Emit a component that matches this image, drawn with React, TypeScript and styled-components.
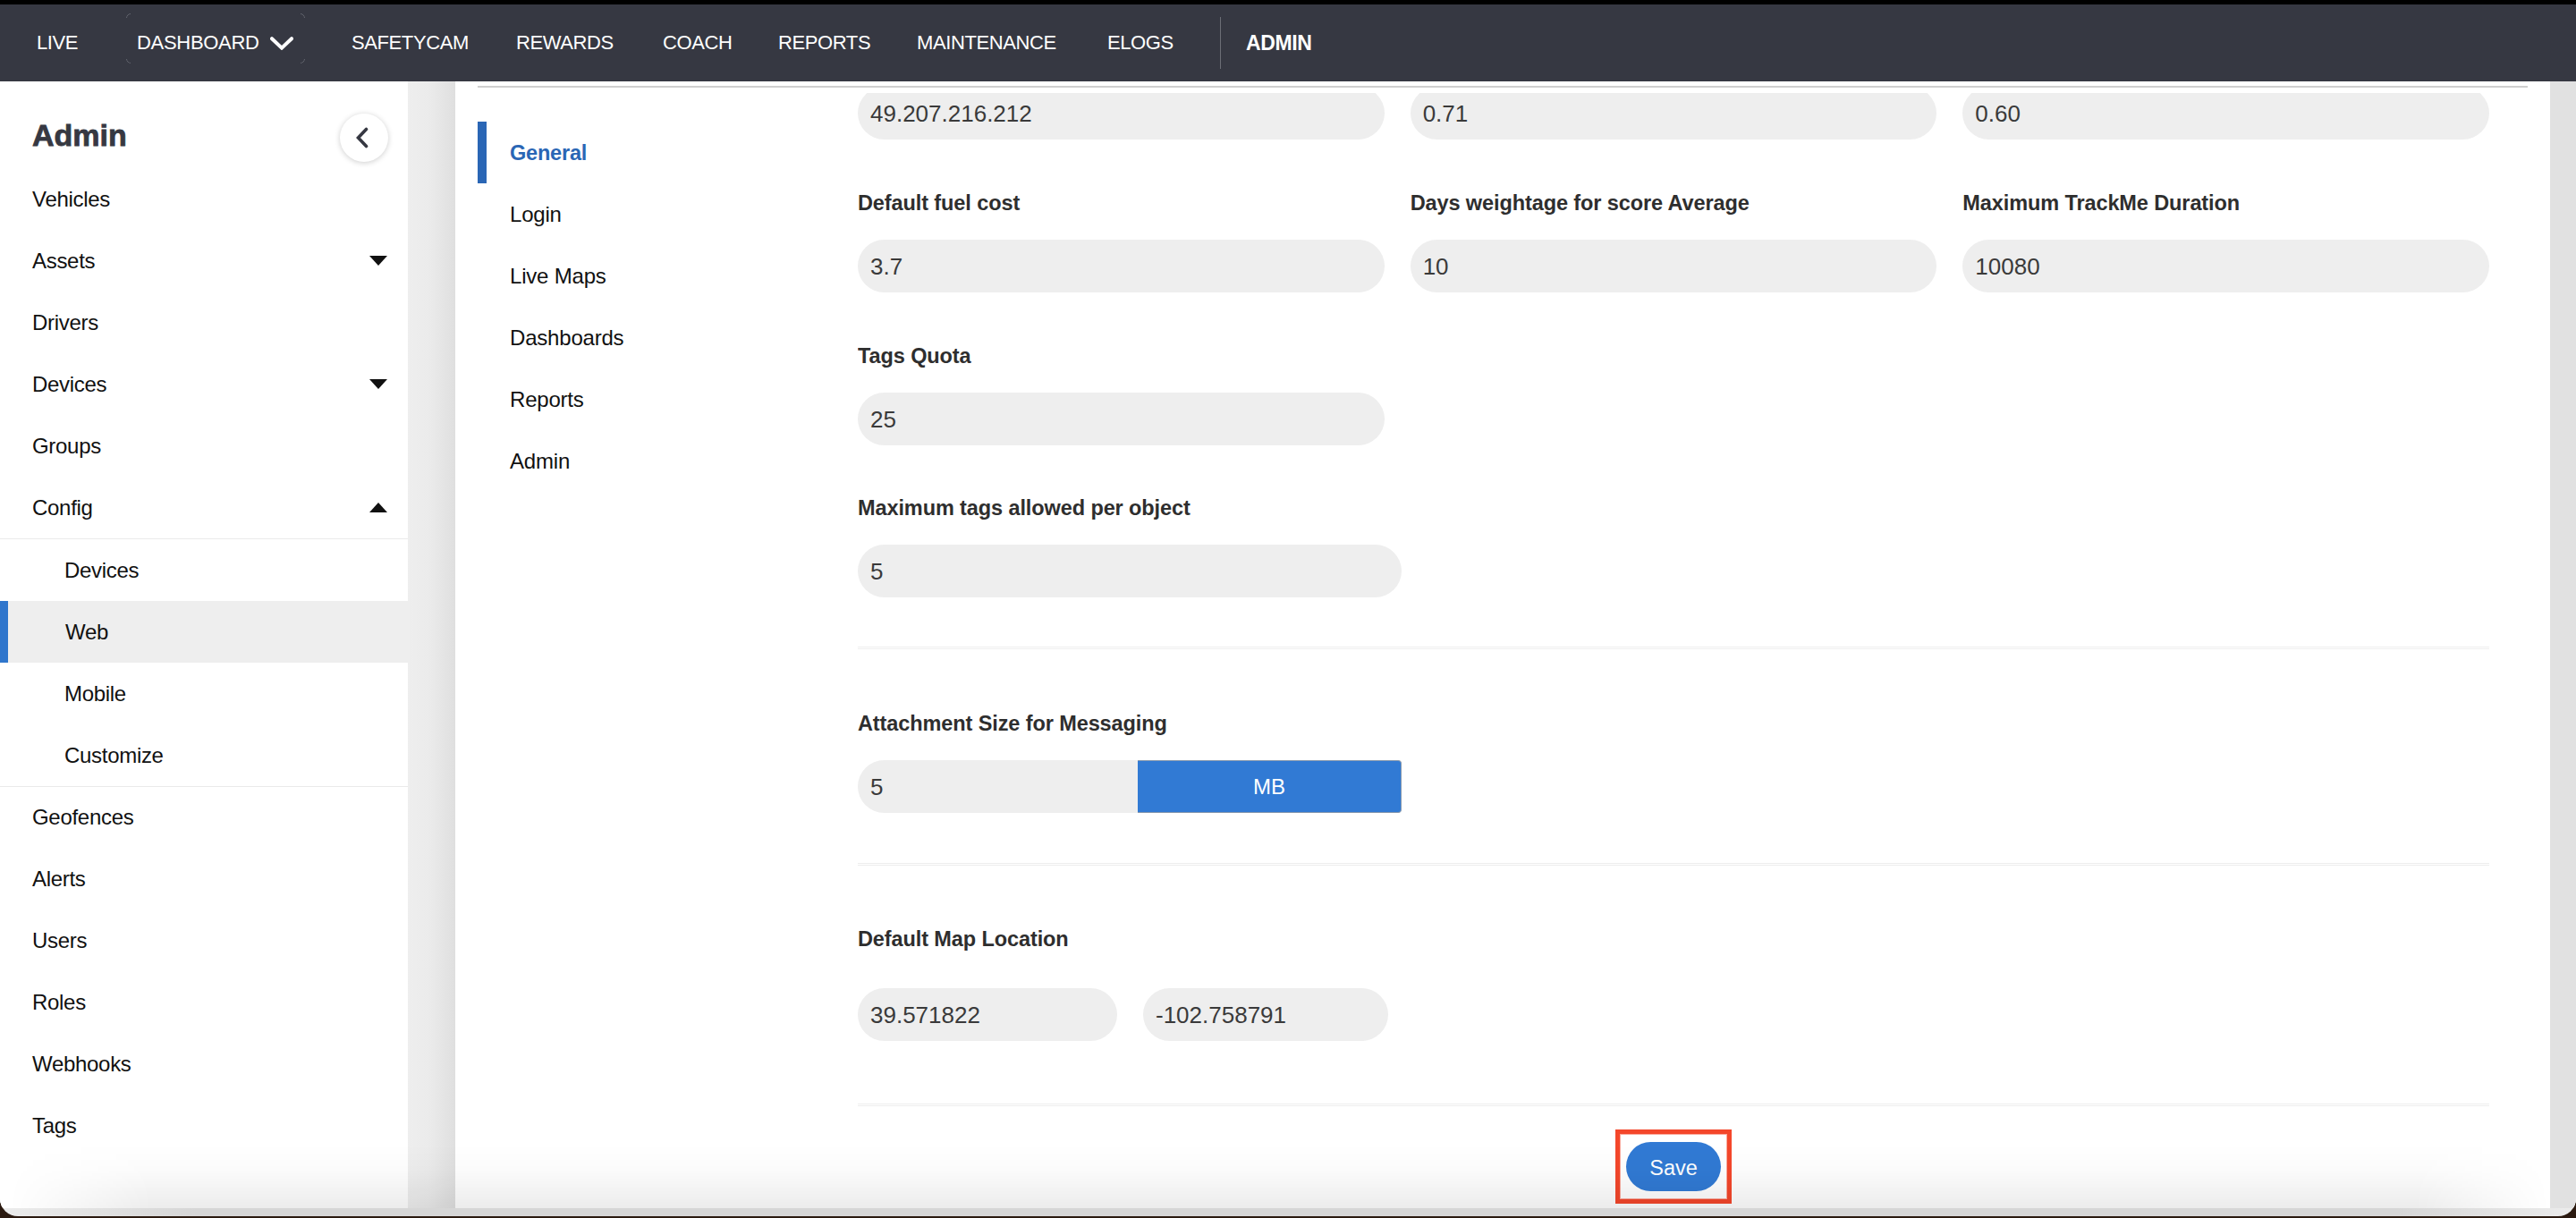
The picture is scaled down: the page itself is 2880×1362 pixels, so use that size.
import React from "react";
import styled, { createGlobalStyle } from "styled-components";

const Global = createGlobalStyle`
  html, body { margin: 0; padding: 0; background: #3a2618; }
  body { font-family: "Liberation Sans", Arial, sans-serif; overflow: hidden; }
  * { box-sizing: border-box; }
`;

const Page = styled.div`
  width: 2880px;
  height: 1362px;
  background: #2b1a10;
  display: flex;
  flex-direction: column;
  overflow: hidden;
`;
const TopEdge = styled.div`
  height: 5px;
  background: #000;
  flex: none;
`;
const Window = styled.div`
  position: relative;
  height: 1355px;
  flex: none;
  display: flex;
  flex-direction: column;
  overflow: hidden;
  border-radius: 0 0 20px 20px;
  background: linear-gradient(90deg, #ececec 0, #d6d6d6 220px, #d6d6d6 2680px, #ececec 2880px);
`;
const TopBar = styled.header`
  height: 86px;
  flex: none;
  background: #363842;
  display: flex;
  align-items: center;
  padding-left: 41px;
  color: #fff;
`;
const NavItem = styled.a<{ $w: number; $bold?: boolean }>`
  width: ${(p) => p.$w}px;
  flex: none;
  font-size: ${(p) => (p.$bold ? 23 : 22)}px;
  font-weight: ${(p) => (p.$bold ? 700 : 400)};
  white-space: nowrap;
  letter-spacing: -0.4px;
`;
const DashboardItem = styled.a`
  position: relative;
  width: 240px;
  flex: none;
  display: flex;
  align-items: center;
  gap: 12px;
  font-size: 22px;
  letter-spacing: -0.3px;
  white-space: nowrap;
  &::before {
    content: "";
    position: absolute;
    left: -12px;
    top: -20px;
    width: 198px;
    height: 54px;
    border: 1px solid #666972;
    border-radius: 5px;
    -webkit-mask:
      linear-gradient(#000 0 0) left top / 5px 5px no-repeat,
      linear-gradient(#000 0 0) right top / 5px 5px no-repeat,
      linear-gradient(#000 0 0) left bottom / 5px 5px no-repeat,
      linear-gradient(#000 0 0) right bottom / 5px 5px no-repeat;
    mask:
      linear-gradient(#000 0 0) left top / 5px 5px no-repeat,
      linear-gradient(#000 0 0) right top / 5px 5px no-repeat,
      linear-gradient(#000 0 0) left bottom / 5px 5px no-repeat,
      linear-gradient(#000 0 0) right bottom / 5px 5px no-repeat;
  }
`;
const NavDivider = styled.div`
  width: 1px;
  height: 58px;
  background: #6b6d75;
  margin-right: 28px;
  flex: none;
`;
const Body = styled.div`
  flex: 1;
  display: flex;
  min-height: 0;
  margin-bottom: 9px;
  background: #fff;
`;
const Sidebar = styled.aside`
  width: 456px;
  flex: none;
  background: #fff;
  display: flex;
  flex-direction: column;
  color: #111;
`;
const SideHead = styled.div`
  height: 97px;
  flex: none;
  padding: 36px 22px 0 36px;
  display: flex;
  justify-content: space-between;
  align-items: flex-start;
`;
const SideTitle = styled.h1`
  margin: 4px 0 0;
  font-size: 34px;
  line-height: 40px;
  font-weight: 700;
  color: #363842;
  -webkit-text-stroke: 0.8px #363842;
`;
const BackButton = styled.button`
  width: 54px;
  height: 54px;
  border: none;
  border-radius: 50%;
  background: #fff;
  box-shadow: 0 1px 6px rgba(0, 0, 0, 0.2);
  display: flex;
  align-items: center;
  justify-content: center;
  padding: 0 4px 0 0;
`;
const SideRow = styled.div`
  height: 69px;
  flex: none;
  display: flex;
  align-items: center;
  justify-content: space-between;
  padding: 0 23px 0 36px;
  font-size: 24px;
  letter-spacing: -0.3px;
`;
const Caret = styled.span<{ $up?: boolean }>`
  width: 0;
  height: 0;
  border-left: 10px solid transparent;
  border-right: 10px solid transparent;
  ${(p) => (p.$up ? "border-bottom: 11px solid #111;" : "border-top: 11px solid #111;")}
`;
const SubGroup = styled.div`
  border-top: 1px solid #eaeaea;
  border-bottom: 1px solid #eaeaea;
  margin-bottom: -1px;
`;
const SubRow = styled.div<{ $active?: boolean }>`
  height: 69px;
  display: flex;
  align-items: center;
  padding-left: ${(p) => (p.$active ? 64 : 72)}px;
  font-size: 24px;
  letter-spacing: -0.3px;
  ${(p) => p.$active && "background: #eeeeee; border-left: 9px solid #2f76cc;"}
`;
const Gutter = styled.div`
  width: 53px;
  flex: none;
  background: linear-gradient(90deg, #eeeeee 0%, #ebebeb 45%, #dfdfdf 100%);
`;
const Panel = styled.main`
  flex: 1;
  min-width: 0;
  background: #fff;
  display: flex;
  flex-direction: column;
  padding: 5px 25px 0 25px;
`;
const PanelRule = styled.div`
  height: 2px;
  flex: none;
  background: #cfcfcf;
  margin-bottom: 6px;
`;
const PanelBody = styled.div`
  flex: 1;
  min-height: 0;
  display: flex;
`;
const SubNav = styled.nav`
  width: 425px;
  flex: none;
  padding-top: 32px;
`;
const SubNavItem = styled.a<{ $active?: boolean }>`
  display: flex;
  align-items: center;
  height: 69px;
  font-size: 24px;
  letter-spacing: -0.2px;
  color: #111;
  padding-left: 36px;
  ${(p) =>
    p.$active &&
    "border-left: 10px solid #2a66b5; padding: 2px 0 0 26px; color: #2a66b5; font-weight: 700; font-size: 23.5px;"}
`;
const Form = styled.section`
  width: 1824px;
  flex: none;
  overflow: hidden;
`;
const ClippedFirst = styled.div`
  margin-top: -7px;
`;
const Grid3 = styled.div<{ $top?: number }>`
  display: grid;
  grid-template-columns: repeat(3, 1fr);
  column-gap: 29px;
  margin-top: ${(p) => p.$top ?? 0}px;
`;
const Field = styled.div<{ $top?: number }>`
  margin-top: ${(p) => p.$top ?? 0}px;
`;
const Label = styled.label<{ $gap?: number }>`
  display: block;
  height: 30px;
  line-height: 30px;
  margin-bottom: ${(p) => p.$gap ?? 26}px;
  font-size: 23.5px;
  font-weight: 700;
  color: #2e2e2e;
  letter-spacing: -0.1px;
  white-space: nowrap;
`;
const TextBox = styled.div<{ $w?: number; $square?: boolean }>`
  width: ${(p) => (p.$w ? `${p.$w}px` : "100%")};
  height: 59px;
  background: #eeeeee;
  border-radius: ${(p) => (p.$square ? "30px 0 0 30px" : "30px")};
  display: flex;
  align-items: center;
  padding: 2px 0 0 14px;
  font-size: 26px;
  color: #3a3a3a;
`;
const InputGroup = styled.div`
  width: 608px;
  display: flex;
`;
const UnitButton = styled.div`
  width: 295px;
  height: 59px;
  flex: none;
  display: flex;
  align-items: center;
  justify-content: center;
  background: #317ad4;
  color: #fff;
  font-size: 24px;
  border: 1px solid #8a9bb0;
  border-left: none;
  border-bottom-color: #7f93ab;
  border-radius: 0 4px 4px 0;
`;
const Rule = styled.div<{ $top: number }>`
  position: relative;
  height: 3px;
  margin-top: ${(p) => p.$top}px;
  border-top: 1px solid #eeeeee;
  border-bottom: 1px solid #eeeeee;
`;
const CoordRow = styled.div`
  display: flex;
  gap: 29px;
`;
const SaveRow = styled.div`
  margin-top: 26px;
  display: flex;
  padding-left: 847px;
`;
const SaveHighlight = styled.div`
  width: 130px;
  height: 83px;
  border: 5px solid #f4472b;
  outline: 1px solid rgba(244, 71, 43, 0.45);
  outline-offset: -6px;
  display: flex;
  align-items: center;
  justify-content: center;
`;
const SaveButton = styled.button`
  width: 106px;
  height: 55px;
  border: none;
  padding: 3px 0 0;
  border-radius: 28px;
  background: #317ad4;
  color: #fff;
  font-family: inherit;
  font-size: 23.5px;
`;
const RightRail = styled.div`
  width: 29px;
  flex: none;
  background: #e1e1e1;
`;
const BottomFade = styled.div`
  position: absolute;
  left: 0;
  right: 0;
  bottom: 9px;
  height: 72px;
  pointer-events: none;
  background: linear-gradient(180deg, rgba(0, 0, 0, 0) 0%, rgba(0, 0, 0, 0.015) 40%, rgba(0, 0, 0, 0.075) 100%);
  -webkit-mask-image: linear-gradient(90deg, transparent 10px, #000 170px, #000 2700px, transparent 2850px);
  mask-image: linear-gradient(90deg, transparent 10px, #000 170px, #000 2700px, transparent 2850px);
`;

const Chevron = styled.svg`
  flex: none;
`;

const navAfter = [
  { t: "SAFETYCAM", w: 184 },
  { t: "REWARDS", w: 164 },
  { t: "COACH", w: 129 },
  { t: "REPORTS", w: 155 },
  { t: "MAINTENANCE", w: 213 },
  { t: "ELOGS", w: 126 },
];

export default function App() {
  return (
    <Page>
      <Global />
      <TopEdge />
      <Window>
        <TopBar>
          <NavItem $w={112}>LIVE</NavItem>
          <DashboardItem>
            DASHBOARD
            <Chevron width="26" height="15" viewBox="0 0 26 15">
              <path d="M2 2.2 L13 12.6 L24 2.2" fill="none" stroke="#fff" strokeWidth="4" strokeLinecap="round" />
            </Chevron>
          </DashboardItem>
          {navAfter.map((n) => (
            <NavItem key={n.t} $w={n.w}>{n.t}</NavItem>
          ))}
          <NavDivider />
          <NavItem $w={90} $bold>ADMIN</NavItem>
        </TopBar>
        <Body>
          <Sidebar>
            <SideHead>
              <SideTitle>Admin</SideTitle>
              <BackButton aria-label="Collapse">
                <svg width="14" height="24" viewBox="0 0 14 24">
                  <path d="M11.5 2.5 L2.5 12 L11.5 21.5" fill="none" stroke="#363842" strokeWidth="3.6" strokeLinecap="round" />
                </svg>
              </BackButton>
            </SideHead>
            <SideRow>Vehicles</SideRow>
            <SideRow>Assets<Caret /></SideRow>
            <SideRow>Drivers</SideRow>
            <SideRow>Devices<Caret /></SideRow>
            <SideRow>Groups</SideRow>
            <SideRow>Config<Caret $up /></SideRow>
            <SubGroup>
              <SubRow>Devices</SubRow>
              <SubRow $active>Web</SubRow>
              <SubRow>Mobile</SubRow>
              <SubRow>Customize</SubRow>
            </SubGroup>
            <SideRow>Geofences</SideRow>
            <SideRow>Alerts</SideRow>
            <SideRow>Users</SideRow>
            <SideRow>Roles</SideRow>
            <SideRow>Webhooks</SideRow>
            <SideRow>Tags</SideRow>
          </Sidebar>
          <Gutter />
          <Panel>
            <PanelRule />
            <PanelBody>
              <SubNav>
                <SubNavItem $active>General</SubNavItem>
                <SubNavItem>Login</SubNavItem>
                <SubNavItem>Live Maps</SubNavItem>
                <SubNavItem>Dashboards</SubNavItem>
                <SubNavItem>Reports</SubNavItem>
                <SubNavItem>Admin</SubNavItem>
              </SubNav>
              <Form>
                <ClippedFirst>
                  <Grid3>
                    <TextBox>49.207.216.212</TextBox>
                    <TextBox>0.71</TextBox>
                    <TextBox>0.60</TextBox>
                  </Grid3>
                </ClippedFirst>
                <Grid3 $top={56}>
                  <div>
                    <Label>Default fuel cost</Label>
                    <TextBox>3.7</TextBox>
                  </div>
                  <div>
                    <Label>Days weightage for score Average</Label>
                    <TextBox>10</TextBox>
                  </div>
                  <div>
                    <Label>Maximum TrackMe Duration</Label>
                    <TextBox>10080</TextBox>
                  </div>
                </Grid3>
                <Grid3 $top={56}>
                  <div>
                    <Label>Tags Quota</Label>
                    <TextBox>25</TextBox>
                  </div>
                </Grid3>
                <Field $top={55}>
                  <Label>Maximum tags allowed per object</Label>
                  <TextBox $w={608}>5</TextBox>
                </Field>
                <Rule $top={55} />
                <Field $top={68}>
                  <Label>Attachment Size for Messaging</Label>
                  <InputGroup>
                    <TextBox $square>5</TextBox>
                    <UnitButton>MB</UnitButton>
                  </InputGroup>
                </Field>
                <Rule $top={56} />
                <Field $top={67}>
                  <Label $gap={40}>Default Map Location</Label>
                  <CoordRow>
                    <TextBox $w={290}>39.571822</TextBox>
                    <TextBox $w={274}>-102.758791</TextBox>
                  </CoordRow>
                </Field>
                <Rule $top={70} />
                <SaveRow>
                  <SaveHighlight>
                    <SaveButton>Save</SaveButton>
                  </SaveHighlight>
                </SaveRow>
              </Form>
            </PanelBody>
          </Panel>
          <RightRail />
        </Body>
        <BottomFade />
      </Window>
    </Page>
  );
}
